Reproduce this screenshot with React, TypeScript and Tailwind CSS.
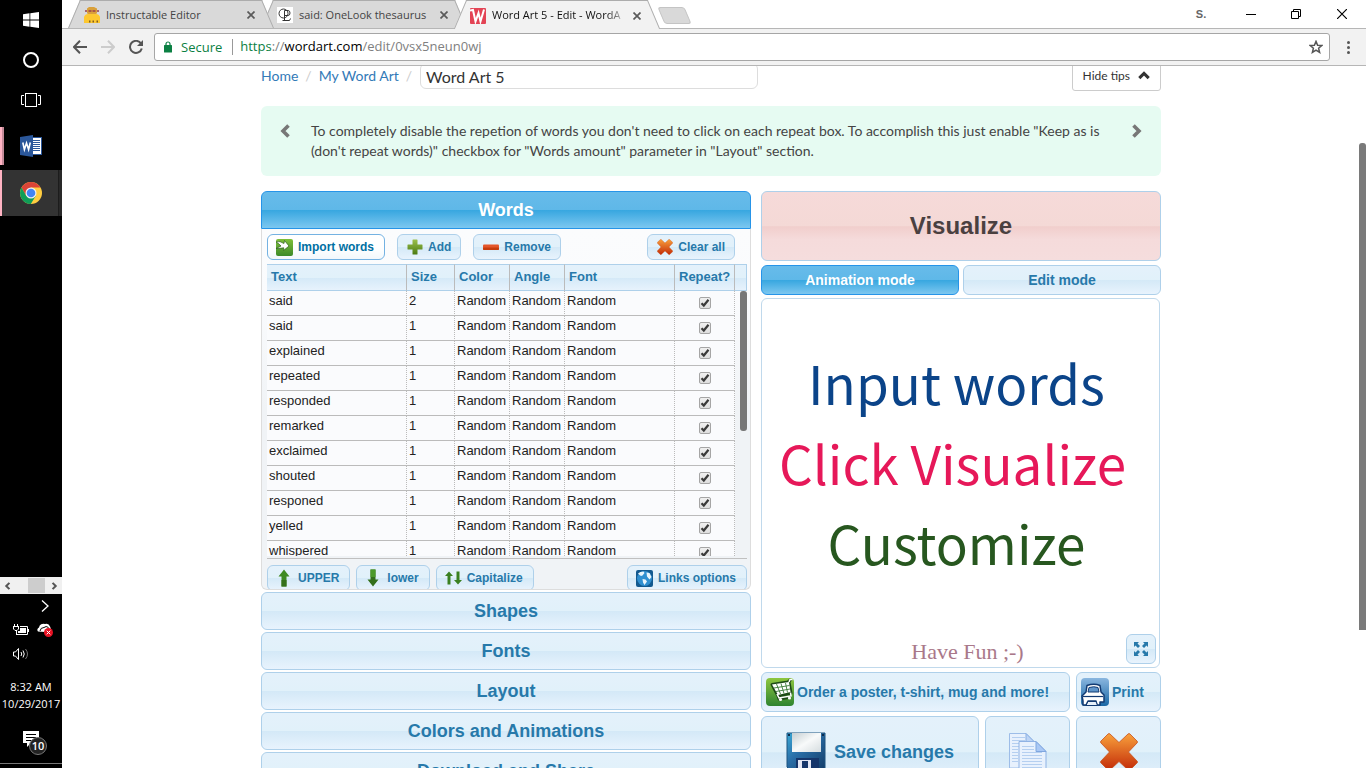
import React, { useState } from "react";

type Word = {
  text: string;
  size: number;
};

type TabProps = {
  title: string;
  icon: React.ReactNode;
  active?: boolean;
  className: string;
};

type ButtonProps = {
  children: React.ReactNode;
  className?: string;
  label?: string;
};

const words: Word[] = [
  { text: "said", size: 2 },
  { text: "said", size: 1 },
  { text: "explained", size: 1 },
  { text: "repeated", size: 1 },
  { text: "responded", size: 1 },
  { text: "remarked", size: 1 },
  { text: "exclaimed", size: 1 },
  { text: "shouted", size: 1 },
  { text: "responed", size: 1 },
  { text: "yelled", size: 1 },
  { text: "whispered", size: 1 },
];

const sections = [
  "Shapes",
  "Fonts",
  "Layout",
  "Colors and Animations",
  "Download and Share",
];

/* ---------- taskbar icons ---------- */

const WindowsIcon = () => (
  <svg width="16" height="16" viewBox="0 0 16 16" fill="#fff">
    <path d="M0 2.2 6.5 1.3V7.5H0zM7.3 1.2 16 0V7.5H7.3zM0 8.4H6.5V14.7L0 13.8zM7.3 8.4H16V16L7.3 14.8z" />
  </svg>
);

const TaskViewIcon = () => (
  <svg width="20" height="14" viewBox="0 0 20 14" fill="none" stroke="#fff">
    <rect x="4.5" y="0.5" width="11" height="13" />
    <path d="M3 2.5H0.5V11.5H3M17 2.5H19.5V11.5H17" />
  </svg>
);

const WordIcon = () => (
  <svg width="22" height="22" viewBox="0 0 22 22">
    <rect x="12" y="2.5" width="9.5" height="17" fill="#fff" stroke="#2b579a" />
    <path
      d="M13 5.5h7M13 7.5h7M13 9.5h7M13 11.5h7M13 13.5h7M13 15.5h7"
      stroke="#2b579a"
    />
    <path d="M0 2 13 0V22L0 20z" fill="#2b579a" />
    <path
      d="M2.8 7.5 4.4 14.5 6.5 8 8.6 14.5 10.3 7.5"
      fill="none"
      stroke="#fff"
      strokeWidth="1.6"
    />
  </svg>
);

const ChromeIcon = () => (
  <svg width="22" height="22" viewBox="0 0 22 22">
    <circle cx="11" cy="11" r="11" fill="#ffcd40" />
    <path d="M1.5 5.5A11 11 0 0 1 20.5 5.5H11L6.2 13.8z" fill="#db4437" />
    <path d="M1.5 5.5A11 11 0 0 0 10.8 22L15.8 13.8 11 16 6.2 13.8z" fill="#0f9d58" />
    <circle cx="11" cy="11" r="5.5" fill="#f1f1f1" />
    <circle cx="11" cy="11" r="4.3" fill="#4285f4" />
  </svg>
);

const BatteryIcon = () => (
  <svg width="16" height="12" viewBox="0 0 16 12">
    <path
      d="M1.5 0V2.5M4.5 0V2.5M0 2.5H6M0.5 2.5V5L2 6.5H4L5.5 5V2.5M3.5 6.5V10.5M7 2.5H14.5V10.5H3"
      fill="none"
      stroke="#fff"
    />
    <path d="M7 4h6v5H5V7h2zM15 5h1v3h-1z" fill="#fff" />
  </svg>
);

const CloudErrorIcon = () => (
  <svg width="16" height="14" viewBox="0 0 16 14">
    <path
      d="M1 8.5A2.5 2.5 0 0 1 2 4.5 4.5 4.5 0 0 1 8 1 4 4 0 0 1 13 3.5L14 6 8 9z"
      fill="#fff"
    />
    <path d="M3 8Q3.5 4.5 7 4.5 9 2.5 11.5 4.5" fill="none" stroke="#000" />
    <circle cx="11.5" cy="9.5" r="4.5" fill="#e81123" />
    <path d="m9.7 7.7 3.6 3.6M13.3 7.7l-3.6 3.6" stroke="#fff" />
  </svg>
);

const SpeakerIcon = () => (
  <svg width="17" height="14" viewBox="0 0 17 14" fill="none" stroke="#fff">
    <path d="M0.5 5H2.5L5.5 1.5V12.5L2.5 9H0.5z" />
    <path d="M8 5Q9.5 7 8 9M10 3.5Q12.5 7 10 10.5" />
    <path d="M12.5 2Q16.5 7 12.5 12" stroke="#777" />
  </svg>
);

const NotesIcon = () => (
  <svg width="16" height="16" viewBox="0 0 16 16">
    <path d="M0 0H16V12H8L4 16V12H0z" fill="#fff" />
    <path d="M3 3.5H13M3 6.5H13M3 9.5H13" stroke="#000" />
  </svg>
);

/* ---------- browser icons ---------- */

const RobotIcon = () => (
  <svg width="16" height="16" viewBox="0 0 16 16">
    <path d="M3 1.5 5 0h5l3 1.5V6l-1.5 2h-7L3 6z" fill="#d9a03a" />
    <path d="M1 4h2M13 4h2M4.5 4h3M8.5 4h3" stroke="#9a3f4c" strokeWidth="1.5" />
    <path d="M0 16V10q1-3 4-3h8q3 0 4 3v6z" fill="#fdc830" />
    <path d="M5 14.5h1.5M8.5 14.5H10M12.5 14.5H14" stroke="#805c20" strokeWidth="2" />
  </svg>
);

const OneLookIcon = () => (
  <svg width="16" height="16" viewBox="0 0 16 16">
    <rect width="16" height="16" fill="#fff" />
    <circle cx="6.5" cy="6.5" r="4.5" fill="none" stroke="#333" />
    <path
      d="M7.5 3.5V13M5.5 13.5h7l1-2M7.5 3.5h3.5q2 0 2 2.5t-2 2.5H8"
      fill="none"
      stroke="#333"
    />
  </svg>
);

const WordArtIcon = () => (
  <svg width="16" height="16" viewBox="0 0 16 16">
    <rect width="16" height="16" rx="1" fill="#e34455" />
    <path
      d="M0 2.5 3 2 5.5 13.5 8.5 5 10.5 13.5 14 1.5"
      fill="none"
      stroke="#fff"
      strokeWidth="2"
    />
  </svg>
);

const CloseIcon = () => (
  <svg width="8" height="8" viewBox="0 0 8 8" stroke="#5a5a5a" strokeWidth="1.7">
    <path d="M0.5 0.5 7.5 7.5M7.5 0.5 0.5 7.5" />
  </svg>
);

const ArrowIcon = ({ flip = false }: { flip?: boolean }) => (
  <svg
    width="14"
    height="14"
    viewBox="0 0 14 14"
    fill="none"
    stroke={flip ? "#ccc" : "#555"}
    strokeWidth="2"
  >
    <path d={flip ? "M0 7H13M7 0.7 13 7 7 13.3" : "M14 7H1M7 0.7 1 7 7 13.3"} />
  </svg>
);

const ReloadIcon = () => (
  <svg width="14" height="14" viewBox="0 0 14 14">
    <path
      d="M12 3.5A6 6 0 1 0 12.8 8.5"
      fill="none"
      stroke="#555"
      strokeWidth="2"
    />
    <path d="M14 0V6H8z" fill="#555" />
  </svg>
);

const LockIcon = () => (
  <svg width="8" height="12" viewBox="0 0 8 12">
    <path d="M2 5V3a2 2 0 0 1 4 0v2" fill="none" stroke="#0b8043" strokeWidth="1.2" />
    <rect y="4" width="8" height="7.5" rx="0.5" fill="#0b8043" />
  </svg>
);

const StarIcon = () => (
  <svg width="14" height="14" viewBox="0 0 14 14">
    <path
      d="M7 1.4 8.6 5.2 12.8 5.5 9.6 8.2 10.6 12.4 7 10.1 3.4 12.4 4.4 8.2 1.2 5.5 5.4 5.2z"
      fill="none"
      stroke="#555"
      strokeWidth="1.5"
    />
  </svg>
);

/* ---------- editor icons ---------- */

const chevrons = {
  left: "M9.5 1.5 4 7 9.5 12.5",
  right: "M4.5 1.5 10 7 4.5 12.5",
  up: "M1.5 9.5 7 4 12.5 9.5",
};

const Chevron = ({ to, size }: { to: keyof typeof chevrons; size: number }) => (
  <svg
    width={size}
    height={size}
    viewBox="0 0 14 14"
    fill="none"
    stroke="currentColor"
    strokeWidth="3.6"
  >
    <path d={chevrons[to]} />
  </svg>
);

const ImportIcon = () => (
  <svg width="17" height="17" viewBox="0 0 17 17">
    <defs>
      <linearGradient id="import" x2="0" y2="1">
        <stop stopColor="#7fbf38" />
        <stop offset="1" stopColor="#3c8a2a" />
      </linearGradient>
    </defs>
    <rect width="17" height="17" rx="2" fill="url(#import)" />
    <path
      d="M0 3Q4 1.5 8 4.5L8.5 1.5 13 7 7.5 11.5 7.8 8.8Q4 9.5 0 9.5L5 7Q3 4.5 0 3z"
      fill="#fff"
      stroke="#2c5d1a"
      strokeWidth="0.7"
    />
  </svg>
);

const PlusIcon = () => (
  <svg width="16" height="16" viewBox="0 0 16 16">
    <defs>
      <linearGradient id="plus" x2="0" y2="1">
        <stop stopColor="#9cc04c" />
        <stop offset="1" stopColor="#4a7a12" />
      </linearGradient>
    </defs>
    <path
      d="M6 0.5h4q.5 0 .5.5v4.5H15q.5 0 .5.5v4q0 .5-.5.5h-4.5V15q0 .5-.5.5H6q-.5 0-.5-.5v-4.5H1q-.5 0-.5-.5V6q0-.5.5-.5h4.5V1q0-.5.5-.5z"
      fill="url(#plus)"
    />
  </svg>
);

const MinusIcon = () => (
  <svg width="16" height="16" viewBox="0 0 16 16">
    <rect y="5.5" width="16" height="5.5" rx="1" fill="#e4572a" />
    <rect y="8.5" width="16" height="2.5" rx="1" fill="#c63c0c" />
  </svg>
);

const CrossIcon = ({ size, id }: { size: number; id: string }) => (
  <svg width={size} height={size} viewBox="0 0 38 38">
    <defs>
      <linearGradient id={id} x2="0" y2="1">
        <stop stopColor="#f9a13c" />
        <stop offset="1" stopColor="#c22a08" />
      </linearGradient>
    </defs>
    <path
      d="M10 1 19 9.5 28 1Q29 0 30 1L37 8Q38 9 37 10L28.5 19 37 28Q38 29 37 30L30 37Q29 38 28 37L19 28.5 10 37Q9 38 8 37L1 30Q0 29 1 28L9.5 19 1 10Q0 9 1 8L8 1Q9 0 10 1z"
      fill={`url(#${id})`}
      stroke="#c8501a"
      strokeWidth="0.8"
    />
  </svg>
);

const UpIcon = () => (
  <svg width="12" height="18" viewBox="0 0 12 18">
    <path d="M6 0.5 11.5 7.5H8.5V17.5H3.5V7.5H0.5z" fill="#3f8a22" />
    <path d="M3.5 11h5v6.5h-5z" fill="#34701c" />
  </svg>
);

const DownIcon = () => (
  <svg width="12" height="18" viewBox="0 0 12 18">
    <path d="M6 17.5 11.5 10.5H8.5V0.5H3.5V10.5H0.5z" fill="#34701c" />
    <path d="M3.5 0.5h5V8h-5z" fill="#4c9a2b" />
  </svg>
);

const UpDownIcon = () => (
  <svg width="17" height="14" viewBox="0 0 17 14" fill="#3a8020">
    <path d="M4 0.5 8 5H5.5V13.5H2.5V5H0z" />
    <path d="M13 13.5 17 9H14.5V0.5H11.5V9H9z" />
  </svg>
);

const GlobeIcon = () => (
  <svg width="17" height="17" viewBox="0 0 17 17">
    <rect width="17" height="17" rx="2" fill="#12598f" />
    <circle cx="8.5" cy="8.5" r="7.5" fill="#2f8fd0" />
    <path
      d="M2 3.5Q4 1.5 7.5 1.5L8.5 3 6.5 5.5 5 6 3.5 5zM6.5 9l3 .5 1.5 2L8.5 15 7 12.5zM10.5 2.5 13.5 3l2 4-2 2.5-2.5-3z"
      fill="#e8f4fb"
    />
  </svg>
);

const ExpandIcon = () => (
  <svg width="16" height="16" viewBox="0 0 16 16" fill="#2779aa">
    <path d="M1 1h5L4.5 2.5 7 5 5 7 2.5 4.5 1 6zM15 1v5l-1.5-1.5L11 7 9 5l2.5-2.5L10 1zM1 15v-5l1.5 1.5L5 9l2 2-2.5 2.5L6 15zM15 15h-5l1.5-1.5L9 11l2-2 2.5 2.5L15 10z" />
  </svg>
);

const CartIcon = () => (
  <svg width="28" height="28" viewBox="0 0 28 28">
    <defs>
      <linearGradient id="cart" x2="0" y2="1">
        <stop stopColor="#8dc63f" />
        <stop offset="1" stopColor="#2f8430" />
      </linearGradient>
    </defs>
    <rect width="28" height="28" rx="4" fill="url(#cart)" />
    <path
      d="M6 6.5 22 4l3-2.5M23 4l2 11-13 3L6 6.5zM12 18l1 3 12-2"
      fill="none"
      stroke="#1d4a16"
      strokeWidth="3"
      strokeLinejoin="round"
    />
    <path d="M6 6.5 23 4 24.5 14 12 17z" fill="#fff" />
    <path
      d="M8 10 23.5 7.5M10 13.5 24 11M10.5 6 14.5 16M15 5.5 18 15.5M19.5 5 21.5 14.5"
      stroke="#3a7a35"
      strokeWidth="0.9"
    />
    <path
      d="m23 4 1-2.5h2.5M24.5 14.5l.5 3.5-12 2-2-4"
      fill="none"
      stroke="#fff"
      strokeWidth="1.5"
    />
    <circle cx="14.5" cy="21.5" r="1.6" fill="#fff" />
    <circle cx="23.5" cy="20" r="1.6" fill="#fff" />
  </svg>
);

const PrinterIcon = () => (
  <svg width="28" height="28" viewBox="0 0 28 28">
    <defs>
      <linearGradient id="printer" x2="0" y2="1">
        <stop stopColor="#8ab6df" />
        <stop offset="1" stopColor="#1967a5" />
      </linearGradient>
    </defs>
    <rect width="28" height="28" rx="4" fill="url(#printer)" />
    <path
      d="M6 7.5Q13 5 19 7.5L20 14 23 17v7h-4v3h-3l-1-4H7l-2 4H2v-4l-1-5 4-4z"
      fill="#fff"
      stroke="#123a72"
      strokeWidth="1.5"
      strokeLinejoin="round"
    />
    <path d="M8 9.5Q13 8 17 9.5L18 14H7z" fill="#5f95ca" stroke="#123a72" />
    <path d="M2 18.5H22" stroke="#123a72" strokeWidth="1.2" />
    <path d="M7 23.5h8l1.5 4H5z" fill="#e8f1fa" stroke="#123a72" />
  </svg>
);

const FloppyIcon = () => (
  <svg width="40" height="40" viewBox="0 0 40 40">
    <defs>
      <linearGradient id="floppy" x2="1" y2="1">
        <stop stopColor="#3aa9d6" />
        <stop offset="0.4" stopColor="#2a6fa8" />
        <stop offset="1" stopColor="#123a66" />
      </linearGradient>
      <linearGradient id="label" x2="1" y2="1">
        <stop stopColor="#c5ced2" />
        <stop offset="0.5" stopColor="#f8fafa" />
        <stop offset="1" stopColor="#d5dcdf" />
      </linearGradient>
    </defs>
    <path d="M1 1H39V39H5L1 35z" fill="url(#floppy)" stroke="#1c527f" />
    <rect x="6" y="1" width="29" height="19" fill="url(#label)" />
    <path d="M2 2h2v2H2zM36 2h2v2h-2z" fill="#0d2c4d" />
    <rect x="10" y="26" width="23" height="13" fill="#15356a" />
    <rect x="12" y="28" width="13" height="12" fill="#e3e6f4" />
    <rect x="16" y="29" width="6" height="10" fill="#15356a" />
  </svg>
);

const PagesIcon = () => (
  <svg width="40" height="40" viewBox="0 0 40 40">
    <path d="M1.5 1.5H18L26 9.5V36H1.5z" fill="#e8f1fd" stroke="#9dbde8" />
    <path
      d="M4 5.5h13M4 8.5h13M4 11.5h19M4 14.5h7M4 17.5h6M4 20.5h6M4 23.5h6M4 26.5h6M4 29.5h6"
      stroke="#b5cff0"
    />
    <path d="M18 1.5 26 9.5H18z" fill="#bcd4f5" stroke="#8aafe3" />
    <path d="M11 9.5H28L38 19.5V39.5H11z" fill="#e8f1fd" stroke="#8fb2e4" />
    <path
      d="M14 14.5h12M14 17.5h12M14 20.5h20M14 23.5h20M14 26.5h20M14 29.5h20M14 32.5h20M14 35.5h20"
      stroke="#b5cff0"
    />
    <path d="M28 9.5V19.5H38z" fill="#a9c8f5" stroke="#7fa6df" />
  </svg>
);

/* ---------- components ---------- */

function SoftButton({ children, className = "", label }: ButtonProps) {
  return (
    <button
      type="button"
      aria-label={label}
      className={`flex shrink-0 items-center rounded-md border border-[#aed0ea] bg-[linear-gradient(#e4f1fb_0%,#e1f1fa_50%,#d4e9f7_51%,#e8f3fd_100%)] font-bold text-[#2779aa] ${className}`}
    >
      {children}
    </button>
  );
}

function BrowserTab({ title, icon, active = false, className }: TabProps) {
  const fill = active ? "bg-[#f2f2f2]" : "bg-[#d9d9d9]";
  return (
    <div className={`relative flex w-[193px] items-center ${className}`}>
      <span
        className={`absolute inset-y-0 left-0 w-1/2 -skew-x-[23deg] border-t border-l border-[#acacac] ${fill}`}
      />
      <span
        className={`absolute inset-y-0 right-0 w-1/2 skew-x-[23deg] border-t border-r border-[#acacac] ${fill}`}
      />
      <span className={`absolute inset-x-4 inset-y-0 border-t border-[#acacac] ${fill}`} />
      <div className="relative flex w-full items-center gap-1.5 pt-0.5 pr-3 pl-2.5">
        {icon}
        <span
          className={`flex-1 overflow-hidden text-[11px] whitespace-nowrap ${
            active
              ? "bg-[linear-gradient(to_right,#111_85%,#f2f2f2)] bg-clip-text text-transparent"
              : "text-[#444]"
          }`}
        >
          {title}
        </span>
        <button type="button" aria-label={`Close ${title}`}>
          <CloseIcon />
        </button>
      </div>
    </div>
  );
}

function Taskbar() {
  return (
    <aside className="flex w-[62px] shrink-0 flex-col bg-black text-white">
      <button type="button" aria-label="Start" className="grid h-10 place-items-center">
        <WindowsIcon />
      </button>
      <button type="button" aria-label="Search" className="grid h-10 place-items-center">
        <span className="size-4 rounded-full border-2 border-white" />
      </button>
      <button type="button" aria-label="Task view" className="grid h-10 place-items-center">
        <TaskViewIcon />
      </button>
      <button
        type="button"
        aria-label="Word"
        className="mt-[7px] flex h-[38px] items-center"
      >
        <span className="h-full w-0.5 bg-[#ffb3c3]" />
        <span className="h-full w-0.5 bg-[#c58a98]" />
        <span className="ml-4">
          <WordIcon />
        </span>
      </button>
      <button
        type="button"
        aria-label="Chrome"
        className="mt-[5px] flex h-[46px] items-center bg-[#333]"
      >
        <span className="h-full w-0.5 bg-[#ffb3c3]" />
        <span className="ml-[18px] flex-1">
          <ChromeIcon />
        </span>
        <span className="h-full w-1 border-l border-[#1c1c1c] bg-[#292929]" />
      </button>

      <div className="mt-auto flex h-[17px] shrink-0 items-center bg-[#f0f0f0] text-[#555]">
        <span className="flex w-7 pl-1">
          <Chevron to="left" size={8} />
        </span>
        <span className="h-[15px] w-[17px] bg-[#cdcdcd]" />
        <span className="flex flex-1 justify-center">
          <Chevron to="right" size={8} />
        </span>
      </div>
      <div className="flex h-6 shrink-0 items-center pl-[41px]">
        <svg width="8" height="12" viewBox="0 0 8 12" fill="none" stroke="#fff" strokeWidth="1.3">
          <path d="M1 0.5 7 6 1 11.5" />
        </svg>
      </div>
      <div className="flex h-6 shrink-0 items-center gap-2 pl-[13px]">
        <BatteryIcon />
        <CloudErrorIcon />
      </div>
      <div className="flex h-6 shrink-0 items-center pl-[13px]">
        <SpeakerIcon />
      </div>
      <div className="shrink-0 pt-3 text-center text-[11px] leading-[17px] whitespace-nowrap">
        <p>8:32 AM</p>
        <p>10/29/2017</p>
      </div>
      <div className="relative h-[51px] shrink-0 pt-[19px] pl-[23px]">
        <NotesIcon />
        <span className="absolute top-[25px] left-[29px] grid size-[18px] place-items-center rounded-full border border-[#777] bg-[#222] text-[11px] font-semibold">
          10
        </span>
      </div>
      <div className="mb-1 h-px shrink-0 bg-[#777]" />
    </aside>
  );
}

function BrowserBar() {
  return (
    <header className="relative z-10 shrink-0">
      <div className="flex h-7 bg-white pl-3">
        <BrowserTab title="Instructable Editor" icon={<RobotIcon />} className="z-10 h-7" />
        <BrowserTab title="said: OneLook thesaurus" icon={<OneLookIcon />} className="h-7" />
        <BrowserTab
          title="Word Art 5 - Edit - WordA"
          icon={<WordArtIcon />}
          active
          className="z-20 h-[29px]"
        />
        <button
          type="button"
          aria-label="New tab"
          className="mt-[7px] ml-2 h-[17px] w-[27px] skew-x-[23deg] rounded-[3px] border border-[#c4c4c4] bg-[#d9d9d9]"
        />
        <div className="ml-auto flex items-center">
          <span className="mr-[13px] w-7 text-center font-['Liberation_Sans'] text-[11px] font-bold text-[#666]">
            S.
          </span>
          <button type="button" aria-label="Minimize" className="grid h-full w-[46px] place-items-center">
            <span className="h-px w-2.5 bg-black" />
          </button>
          <button type="button" aria-label="Restore" className="grid h-full w-11 place-items-center">
            <svg width="10" height="10" viewBox="0 0 10 10" fill="none" stroke="#000">
              <path d="M0.5 2.5H7.5V9.5H0.5zM2.5 2.5V0.5H9.5V7.5H7.5" />
            </svg>
          </button>
          <button type="button" aria-label="Close" className="grid h-full w-12 place-items-center">
            <svg width="10" height="10" viewBox="0 0 10 10" stroke="#000" strokeWidth="1.2">
              <path d="M0 0 10 10M10 0 0 10" />
            </svg>
          </button>
        </div>
      </div>
      <div className="flex h-[38px] items-center border-y border-[#b6b6b6] bg-[#f2f2f2] pr-4 pl-[11px]">
        <button type="button" aria-label="Back">
          <ArrowIcon />
        </button>
        <button type="button" aria-label="Forward" className="ml-3.5">
          <ArrowIcon flip />
        </button>
        <button type="button" aria-label="Reload" className="ml-3.5">
          <ReloadIcon />
        </button>
        <div className="mr-[17px] ml-[11px] flex h-7 flex-1 items-center rounded-[3px] border border-[#a6a6a6] bg-white pr-1.5 pl-[9px] text-[13px]">
          <LockIcon />
          <span className="ml-[9px] border-r border-[#999] pr-2.5 leading-4 text-[#0b8043]">
            Secure
          </span>
          <p className="ml-[7px] flex-1 text-[#808080]">
            <span className="text-[#0b8043]">https</span>://
            <span className="text-black">wordart.com</span>/edit/0vsx5neun0wj
          </p>
          <button type="button" aria-label="Bookmark">
            <StarIcon />
          </button>
        </div>
        <button type="button" aria-label="Menu" className="flex flex-col gap-0.5">
          <span className="size-[3px] rounded-full bg-[#555]" />
          <span className="size-[3px] rounded-full bg-[#555]" />
          <span className="size-[3px] rounded-full bg-[#555]" />
        </button>
      </div>
    </header>
  );
}

function WordRow({ word, index }: { word: Word; index: number }) {
  const [repeat, setRepeat] = useState<boolean>(true);
  const cell =
    "h-[25px] border-b border-b-[#bbb] border-r border-r-[#bbb] [border-right-style:dotted] bg-[#fafbfd] pl-0.5 align-top leading-[19px]";

  return (
    <tr>
      <td className={cell}>{word.text}</td>
      <td className={cell}>{word.size}</td>
      <td className={cell}>Random</td>
      <td className={cell}>Random</td>
      <td className={cell}>Random</td>
      <td className="h-[25px] border-r border-b border-[#bbb] [border-right-style:dotted] bg-[#fafbfd]">
        <label className="relative mx-auto block size-3">
          <input
            type="checkbox"
            aria-label={`Repeat word ${index + 1}`}
            checked={repeat}
            onChange={(e) => setRepeat(e.target.checked)}
            className="block size-3 appearance-none rounded-[2px] border border-[#a5a5a5] bg-[linear-gradient(#f0f0f0,#dedede)]"
          />
          {repeat && (
            <svg
              className="absolute top-0 left-0"
              width="12"
              height="12"
              viewBox="0 0 12 12"
              fill="none"
              stroke="#3a3a3a"
              strokeWidth="2.2"
            >
              <path d="M2.5 6.2 4.8 8.5 9.5 2.8" />
            </svg>
          )}
        </label>
      </td>
      <td />
    </tr>
  );
}

function WordsPanel() {
  const head = "border-y border-[#aed0ea] border-r border-r-[#bbb] pl-1 text-left font-bold";

  return (
    <section>
      <h2>
        <button
          type="button"
          className="h-[38px] w-full rounded-t-md border border-[#2694e8] bg-[linear-gradient(#67bbea_0%,#5fb8e8_49%,#38a7e0_51%,#7cc7f0_100%)] text-lg font-bold text-white"
        >
          Words
        </button>
      </h2>
      <div className="h-[361px] overflow-hidden rounded-b-md border border-t-0 border-[#ddd] bg-[linear-gradient(#fbfcfd_0%,#fafbfd_20%,#f0f3f6_50%)] pt-[5px] pr-[3px] pl-[5px]">
        <div className="flex gap-3 pr-3 text-xs">
          <button
            type="button"
            className="flex h-[26px] items-center gap-[5px] rounded-md border border-[#74b2e2] bg-[linear-gradient(#fff_50%,#f2f8fc)] px-2.5 pl-2 font-bold text-[#0070a3]"
          >
            <ImportIcon />
            Import words
          </button>
          <SoftButton className="h-[26px] gap-[5px] px-[9px]">
            <PlusIcon />
            Add
          </SoftButton>
          <SoftButton className="h-[26px] gap-[5px] px-[9px]">
            <MinusIcon />
            Remove
          </SoftButton>
          <SoftButton className="ml-auto h-[26px] gap-[5px] px-[9px]">
            <CrossIcon size={16} id="clear" />
            Clear all
          </SoftButton>
        </div>
        <div className="relative mt-1 h-[292px] overflow-hidden">
          <table className="w-full table-fixed border-separate border-spacing-0 text-[13px] text-[#222]">
            <colgroup>
              <col className="w-[140px]" />
              <col className="w-12" />
              <col className="w-[55px]" />
              <col className="w-[55px]" />
              <col />
              <col className="w-[60px]" />
              <col className="w-3" />
            </colgroup>
            <thead className="text-[#2779aa]">
              <tr className="h-[27px] bg-[linear-gradient(#e4f1fb_0%,#e1f1fa_50%,#d4e9f7_51%,#e8f3fd_100%)]">
                <th className={head}>Text</th>
                <th className={head}>Size</th>
                <th className={head}>Color</th>
                <th className={head}>Angle</th>
                <th className={head}>Font</th>
                <th className={head}>Repeat?</th>
                <th className="border-y border-r border-[#aed0ea]" />
              </tr>
            </thead>
            <tbody>
              {words.map((word, index) => (
                <WordRow key={index} word={word} index={index} />
              ))}
            </tbody>
          </table>
          <span className="absolute top-[27px] right-0 h-[140px] w-[7px] rounded-[3px] bg-[#777]" />
        </div>
        <div className="h-[3px] border-b border-[#c0c0c0]" />
        <div className="mt-1.5 flex gap-1.5 text-xs">
          <SoftButton className="h-[26px] gap-2 px-2.5">
            <UpIcon />
            UPPER
          </SoftButton>
          <SoftButton className="h-[26px] gap-2 px-2.5">
            <DownIcon />
            lower
          </SoftButton>
          <SoftButton className="h-[26px] gap-[5px] pr-2.5 pl-2">
            <UpDownIcon />
            Capitalize
          </SoftButton>
          <SoftButton className="ml-auto h-[26px] gap-[5px] pr-2.5 pl-2">
            <GlobeIcon />
            Links options
          </SoftButton>
        </div>
      </div>
      <div className="mt-0.5 flex flex-col gap-0.5">
        {sections.map((section) => (
          <SoftButton key={section} className="h-[38px] justify-center text-lg">
            {section}
          </SoftButton>
        ))}
      </div>
    </section>
  );
}

function PreviewPanel() {
  return (
    <section className="text-sm">
      <button
        type="button"
        className="block h-[70px] w-full rounded-md border border-[#aed0ea] bg-[linear-gradient(#f6dad9_0%,#f4d9d6_50%,#f1cecc_51%,#f5dbdb_70%,#f5dddd_100%)] text-2xl font-bold text-[#4a4040]"
      >
        Visualize
      </button>
      <div className="mt-1 grid grid-cols-2 gap-1">
        <button
          type="button"
          className="h-[30px] rounded-md border border-[#2694e8] bg-[linear-gradient(#67bbea_0%,#5fb8e8_49%,#38a7e0_51%,#7cc7f0_100%)] font-bold text-white"
        >
          Animation mode
        </button>
        <SoftButton className="h-[30px] justify-center">Edit mode</SoftButton>
      </div>
      <div className="relative mt-[3px] mr-px h-[370px] rounded-md border border-[#c0d9ec] bg-white pt-[43px] text-center font-['Noto_Sans_CJK_SC',sans-serif] text-[53px] leading-20">
        <p className="pr-2 text-[#0b4489]">Input words</p>
        <p className="pr-4 text-[#e61859]">Click Visualize</p>
        <p className="pr-2 text-[#27571f]">Customize</p>
        <p className="mt-11 pl-3.5 font-['Liberation_Serif',serif] text-[22px] leading-[52px] text-[#a9788a]">
          Have Fun ;-)
        </p>
        <div className="absolute right-[3px] bottom-[3px]">
          <SoftButton label="Full screen" className="size-[30px] justify-center">
            <ExpandIcon />
          </SoftButton>
        </div>
      </div>
      <div className="mt-1 grid grid-cols-[1fr_85px] gap-1.5">
        <SoftButton className="h-10 gap-[3px] pl-1 whitespace-nowrap">
          <CartIcon />
          Order a poster, t-shirt, mug and more!
        </SoftButton>
        <SoftButton className="h-10 gap-[3px] pl-1">
          <PrinterIcon />
          Print
        </SoftButton>
      </div>
      <div className="mt-1 grid grid-cols-[1fr_85px_85px] gap-1.5">
        <SoftButton className="h-[72px] justify-center gap-2 text-lg">
          <FloppyIcon />
          Save changes
        </SoftButton>
        <SoftButton label="Make a copy" className="h-[72px] justify-center">
          <PagesIcon />
        </SoftButton>
        <SoftButton label="Delete" className="h-[72px] justify-center">
          <CrossIcon size={38} id="delete" />
        </SoftButton>
      </div>
    </section>
  );
}

export default function App() {
  return (
    <div className="flex h-screen overflow-hidden bg-white font-['Open_Sans',sans-serif]">
      <Taskbar />
      <div className="flex min-w-0 flex-1 flex-col">
        <BrowserBar />
        <main className="relative min-h-0 flex-1 overflow-hidden pr-1.5">
          <div className="mx-auto -mt-[5px] max-w-[900px] font-['Lato',sans-serif] text-sm">
            <div className="flex h-[30px] items-center">
              <nav className="flex gap-[7px] text-[#337ab7]">
                <a href="#home">Home</a>
                <span className="text-[#ccc]">/</span>
                <a href="#my">My Word Art</a>
                <span className="text-[#ccc]">/</span>
              </nav>
              <input
                type="text"
                aria-label="Title"
                defaultValue="Word Art 5"
                className="ml-2 h-[26px] w-[338px] rounded-md border border-[#ddd] px-[5px] text-base text-[#333]"
              />
              <button
                type="button"
                className="ml-auto flex h-[30px] items-center gap-2 rounded-[3px] border border-[#ccc] px-2.5 text-xs text-[#333]"
              >
                Hide tips
                <Chevron to="up" size={12} />
              </button>
            </div>
            <div className="mt-[15px] flex rounded-md bg-[#e6fbf2] px-[18px] py-[15px] text-[#444]">
              <button type="button" aria-label="Previous tip" className="flex h-5 items-center text-[#777]">
                <Chevron to="left" size={14} />
              </button>
              <p className="flex-1 pr-5 pl-[18px] leading-5">
                To completely disable the repetion of words you don't need to click on each repeat box. To
                accomplish this just enable "Keep as is (don't repeat words)" checkbox for "Words amount"
                parameter in "Layout" section.
              </p>
              <button type="button" aria-label="Next tip" className="flex h-5 items-center text-[#777]">
                <Chevron to="right" size={14} />
              </button>
            </div>
            <div className="mt-[15px] grid grid-cols-[49fr_40fr] gap-2.5 font-['Liberation_Sans',sans-serif]">
              <WordsPanel />
              <PreviewPanel />
            </div>
          </div>
          <span className="absolute top-[77px] right-0 h-[487px] w-[7px] rounded-t-[3px] bg-[#7a7a7a]" />
        </main>
      </div>
    </div>
  );
}
